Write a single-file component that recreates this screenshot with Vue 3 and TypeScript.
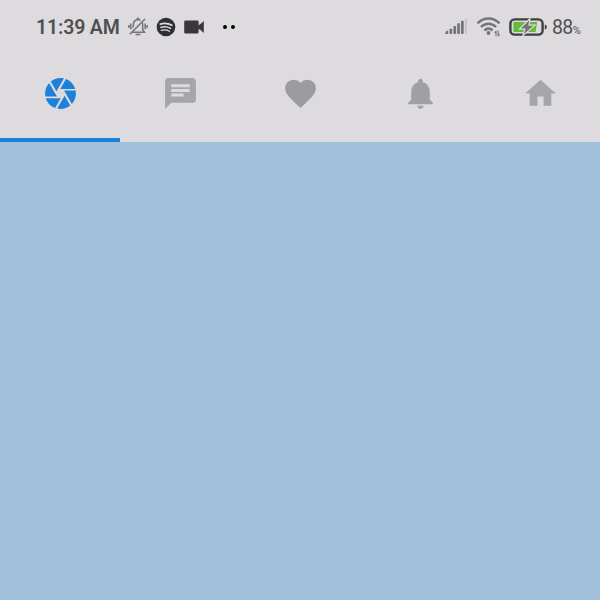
<script setup lang="ts">
import { ref } from 'vue'

interface Tab {
  name: string
  path: string
  color: string
}

const active = ref(0)
const tabs: Tab[] = [
  { name: 'camera', color: '#9d9c9e', path: 'M9.4 10.5l4.77-8.26C13.47 2.09 12.75 2 12 2c-2.4 0-4.6.85-6.32 2.25l3.66 6.35.06-.1zM21.54 9c-.92-2.92-3.15-5.26-6-6.34L11.88 9h9.66zm.26 1h-7.49l.29.5 4.76 8.25C21 16.97 22 14.61 22 12c0-.69-.07-1.35-.2-2zM8.54 12l-3.9-6.75C3.01 7.03 2 9.39 2 12c0 .69.07 1.35.2 2h7.49l-1.15-2zm-6.08 3c.92 2.92 3.15 5.26 6 6.34L12.12 15H2.46zm11.27 0l-3.9 6.76c.7.15 1.42.24 2.17.24 2.4 0 4.6-.85 6.32-2.25l-3.66-6.35-.93 1.6z' },
  { name: 'chat', color: '#a6a5a7', path: 'M20 2H4c-1.1 0-1.99.9-1.99 2L2 22l4-4h14c1.1 0 2-.9 2-2V4c0-1.1-.9-2-2-2zM6 9h12v2H6V9zm8 5H6v-2h8v2zm4-6H6V6h12v2z' },
  { name: 'favorite', color: '#9c9b9d', path: 'M12 21.35l-1.45-1.32C5.4 15.36 2 12.28 2 8.5 2 5.42 4.42 3 7.5 3c1.74 0 3.41.81 4.5 2.09C13.09 3.81 14.76 3 16.5 3 19.58 3 22 5.42 22 8.5c0 3.78-3.4 6.86-8.55 11.54L12 21.35z' },
  { name: 'notifications', color: '#a09fa1', path: 'M12 22c1.1 0 2-.9 2-2h-4c0 1.1.89 2 2 2zm6-6v-5c0-3.07-1.64-5.64-4.5-6.32V4c0-.83-.67-1.5-1.5-1.5s-1.5.67-1.5 1.5v.68C7.63 5.36 6 7.92 6 11v5l-2 2v1h16v-1l-2-2z' },
  { name: 'home', color: '#a6a5a7', path: 'M10 20v-6h4v6h5v-8h3L12 3 2 12h3v8z' },
]
</script>

<template>
  <div class="screen">
    <header class="status">
      <span class="time">11:39 AM</span>
      <svg class="mute" width="20" height="20" viewBox="0 0 20 20" fill="none" stroke="#747375" stroke-width="1.5">
        <path d="M3.6 15.2h12.8l-1.7-2.4V8.4C14.7 5 12.8 2.8 10 2.8S5.3 5 5.3 8.4v4.4zM8.6 1.6h2.8M2.8 6.5v5.8M.9 8v3M17.2 6.5v5.8M19.1 8v3M7.6 17.6h4.8" />
        <path d="M1.3 16.5L16.4 1.4" stroke="#dedbde" stroke-width="2.6" />
        <path d="M1.8 17.3L17 2" />
      </svg>
      <svg class="music" width="20" height="20" viewBox="0 0 20 20" fill="none" stroke="#dedbde" stroke-linecap="round">
        <circle cx="10" cy="10" r="9.3" fill="#303032" stroke="none" />
        <path d="M4.3 7.1c4-1.1 8-.7 11.6 1.1" stroke-width="1.8" />
        <path d="M4.8 10.4c3.5-1 6.8-.6 9.8 1" stroke-width="1.5" />
        <path d="M5.3 13.3c3-.7 5.7-.4 8.1 1" stroke-width="1.3" />
      </svg>
      <svg class="video" width="21" height="14" viewBox="0 0 21 14" fill="#39373b">
        <path d="M1.5.5h11.8q1.3 0 1.3 1.3v3.4l2.2-1.5L19.8 1v12l-3-2.7-2.2-1.5v3.4q0 1.3-1.3 1.3H1.5Q.2 13.5.2 12.2V1.8Q.2.5 1.5.5z" />
      </svg>
      <span class="dots"><i /><i /></span>
      <span class="spacer" />
      <svg class="signal" width="23" height="16" viewBox="0 0 23 16" fill="#747375">
        <path d="M.4 15v-1.6q0-1.2 2.7-1.8V15z" />
        <rect x="4.5" y="9.8" width="2.7" height="5.2" rx=".8" />
        <rect x="8.4" y="7" width="2.7" height="8" rx=".8" />
        <rect x="12.2" y="4.2" width="2.7" height="10.8" rx=".8" />
        <rect x="16" y="1.8" width="2.7" height="13.2" rx=".8" />
        <rect x="19.9" y="0" width="2" height="15" rx=".8" fill="#c4c2c4" />
      </svg>
      <svg class="wifi" width="26" height="22" viewBox="0 0 26 22" fill="none" stroke="#747375" stroke-width="2.4">
        <path d="M1.5 7.3C8 .9 17 .9 23.5 7.3M4.9 11c4.6-4.4 10.6-4.4 15.2 0M8.4 14.5c2.6-2.4 5.6-2.4 8.2 0" />
        <circle cx="12.5" cy="17" r="1.9" fill="#747375" stroke="none" />
        <path d="M20 20.2v-4.8l-1.5 1.5M22.2 14.7v5l1.5-1.5" stroke-width="1.1" />
      </svg>
      <svg class="battery" width="39" height="20" viewBox="0 0 39 20">
        <rect x="1.4" y="2.4" width="32.2" height="15.2" rx="4.2" fill="none" stroke="#3f3e40" stroke-width="2.4" />
        <path d="M35.8 7.5q2 .4 2 2.5t-2 2.5z" fill="#3f3e40" />
        <path d="M5.4 5h22.8l-1.6 10H5.4q-1 0-1-1V6q0-1 1-1z" fill="#62bc36" />
        <path d="M21 1.5L10.4 12.2h5.3L13.9 18.6L26 8.2h-6z" fill="#737474" stroke="#dedbde" stroke-width="1.2" />
      </svg>
      <span class="percent">88<small>%</small></span>
    </header>
    <nav class="tabs">
      <button v-for="(tab, i) in tabs" :key="tab.name" class="tab" :class="{ active: active === i }" :aria-label="tab.name" @click="active = i">
        <svg width="37" height="37" viewBox="0 0 24 24"><path :d="tab.path" :fill="active === i ? '#1c82d9' : tab.color" /></svg>
      </button>
    </nav>
    <main class="content" />
  </div>
</template>

<style>
body { margin: 0; }
</style>

<style scoped>
.screen {
  width: 600px;
  height: 600px;
  display: flex;
  flex-direction: column;
  background: #dedbde;
  font-family: Roboto, "Liberation Sans", sans-serif;
  overflow: hidden;
}
.status {
  height: 44px;
  box-sizing: border-box;
  padding: 10px 18px 0 36px;
  display: flex;
  align-items: center;
  color: #505052;
}
.status svg { flex: none; display: block; }
.time { width: 92px; flex: none; font-size: 19.5px; font-weight: 600; white-space: nowrap; letter-spacing: -.15px; }
.music { margin-left: 8px; }
.video { margin-left: 8px; }
.dots { display: flex; gap: 4px; margin-left: 18px; }
.dots i { width: 4px; height: 4px; border-radius: 50%; background: #050505; }
.spacer { flex: 1; }
.wifi { margin-left: 8px; }
.battery { margin-left: 7px; }
.percent { width: 30px; margin-left: 4px; flex: none; font-size: 19.5px; font-weight: 450; white-space: nowrap; letter-spacing: -.6px; }
.percent small { font-size: 11px; letter-spacing: 0; }
.tabs { display: grid; grid-template-columns: repeat(5, 1fr); height: 98px; }
.tab {
  border: 0;
  border-bottom: 4px solid transparent;
  background: none;
  padding: 0;
  display: flex;
  align-items: flex-start;
  justify-content: center;
}
.tab svg { display: block; margin-top: 31px; }
.tab.active { border-bottom-color: #1c82d9; }
.content { flex: 1; background: #a2bfda; }
</style>
